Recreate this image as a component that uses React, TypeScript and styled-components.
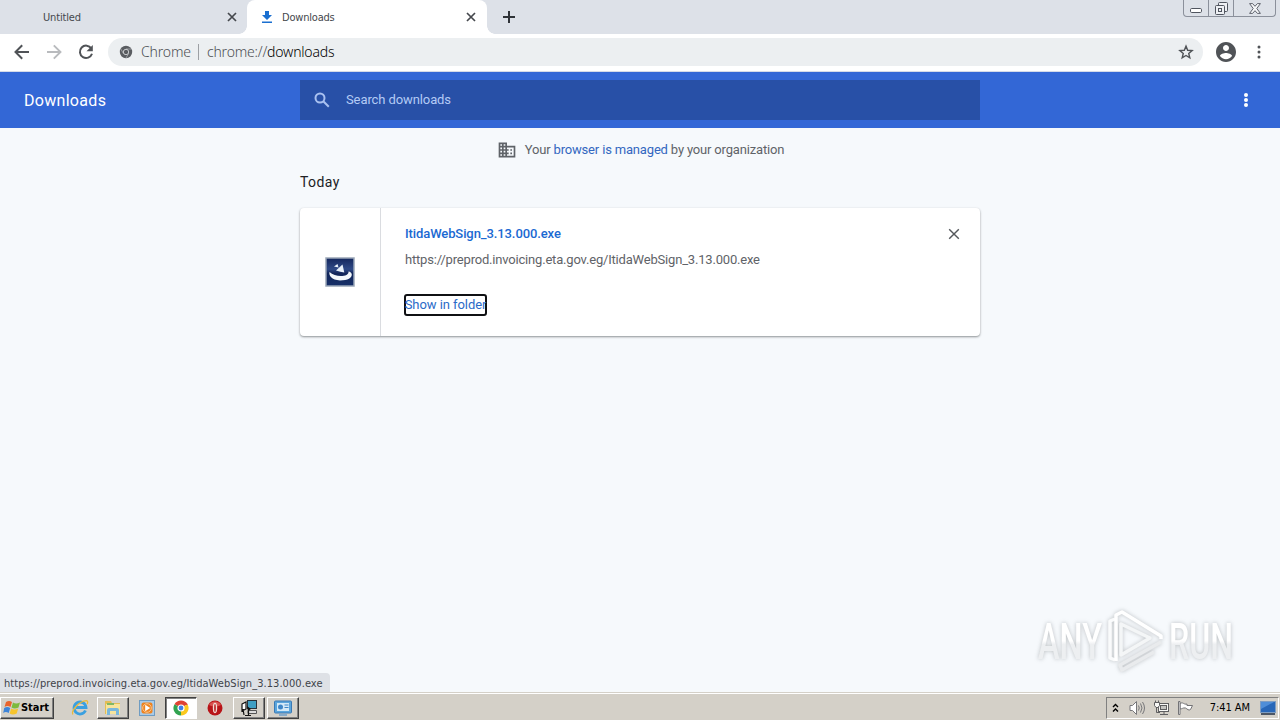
import React from 'react'
import styled, { createGlobalStyle } from 'styled-components'


const GlobalStyle = createGlobalStyle`
	*{
		box-sizing: border-box;
	}
	body{
		margin: 0;
		overflow: hidden;
		font-family: Roboto, "Liberation Sans", sans-serif;
	}
	svg{
		display: block;
		flex: none;
		overflow: visible;
	}
	a{
		text-decoration: none;
	}
`;


function CloseIcon({ size, width }: { size: number; width: number }) {
	return (
		<svg width={size} height={size} viewBox="0 0 10 10" fill="none" stroke="currentColor" strokeWidth={width}>
			<path d="M1 1l8 8M9 1l-8 8" />
		</svg>
	)
}

function DotsIcon({ r, gap }: { r: number; gap: number }) {
	return (
		<svg width="6" height="16" viewBox="-3 -8 6 16" fill="currentColor">
			<circle cy={-gap} r={r} />
			<circle r={r} />
			<circle cy={gap} r={r} />
		</svg>
	)
}

function TabStrip() {
	return (
		<TabStripStyled>
			<Tab $width={247} $pad={43}>
				<TabTitle $spacing={-0.15}>Untitled</TabTitle>
				<TabClose $right={10}><CloseIcon size={10} width={1.7} /></TabClose>
			</Tab>
			<Tab $width={240} $pad={14} $active>
				<svg width="12" height="14" viewBox="0 0 12 14" fill="#1a6fd0">
					<path d="M4 1h4v4h3L6 10 1 5h3zM1 11.5h10V13H1z" />
				</svg>
				<TabTitle $spacing={-0.2} $left={9}>Downloads</TabTitle>
				<TabClose $right={11}><CloseIcon size={10} width={1.7} /></TabClose>
			</Tab>
			<NewTab>
				<svg width="12" height="12" viewBox="0 0 12 12" stroke="#2f3338" strokeWidth="2">
					<path d="M6 0v12M0 6h12" />
				</svg>
			</NewTab>
			<WindowButtons>
				<WindowButton $width={25}>
					<svg width="12" height="5" viewBox="0 0 12 5" fill="#fff" stroke="#50555f">
						<rect x=".5" y=".5" width="11" height="4" rx="1.2" />
					</svg>
				</WindowButton>
				<WindowButton $width={25}>
					<svg width="13" height="13" viewBox="0 0 13 13" fill="#eef0f4" stroke="#50555f">
						<rect x="3.5" y=".5" width="9" height="9" rx="1" />
						<rect x=".5" y="3.5" width="9" height="9" rx="1" />
						<rect x="3.5" y="6.5" width="3" height="3" />
					</svg>
				</WindowButton>
				<WindowButton $width={41}>
					<svg width="12" height="11" viewBox="0 0 12 11" fill="#f5f6f8" stroke="#50555f" strokeWidth=".9">
						<path d="M.6.6h3L6 3.300 8.400.6h3L7.800 5.500l3.600 4.900h-3L6 7.700l-2.400 2.700h-3L4.200 5.500z" />
					</svg>
				</WindowButton>
			</WindowButtons>
		</TabStripStyled>
	)
}

function Toolbar() {
	return (
		<ToolbarStyled>
			<NavIcons>
				<svg width="16" height="16" viewBox="0 0 16 16" fill="none" stroke="#505357" strokeWidth="2">
					<path d="M15 8H2M8.200 1.300L1.500 8l6.700 6.700" />
				</svg>
				<svg width="16" height="16" viewBox="0 0 16 16" fill="none" stroke="#b9bbbe" strokeWidth="1.900">
					<path d="M1 8h13M7.800 1.300L14.500 8l-6.700 6.700" />
				</svg>
				<svg width="16" height="16" viewBox="0 0 16 16" fill="none" stroke="#505357" strokeWidth="2">
					<path d="M13.300 4.400A6.200 6.200 0 1 0 14 9.800" />
					<path d="M14.800 1v6.300H8.500z" fill="#505357" stroke="none" />
				</svg>
			</NavIcons>
			<Omnibox>
				<svg width="14" height="14" viewBox="0 0 14 14">
					<circle cx="7" cy="7" r="6.200" fill="#5a5d61" />
					<path d="M7 4h5.600M4.400 8.500L1.700 3.800M9.600 8.500L7 13" stroke="#b5b8bb" strokeWidth=".7" />
					<circle cx="7" cy="7" r="2.700" fill="#5a5d61" stroke="#d4d6d8" strokeWidth=".9" />
				</svg>
				<OriginLabel>Chrome</OriginLabel>
				<Separator />
				<Url>chrome://<b>downloads</b></Url>
				<svg width="16" height="16" viewBox="0 0 24 24" fill="none" stroke="#505357" strokeWidth="2.100">
					<path d="M12 3.200l2.500 6.200 6.700.5-5.100 4.300 1.600 6.500-5.700-3.500-5.700 3.500 1.600-6.500-5.100-4.300 6.700-.5z" />
				</svg>
			</Omnibox>
			<Avatar>
				<svg width="20" height="20" viewBox="2 2 20 20" fill="#505357">
					<path d="M12 2C6.480 2 2 6.480 2 12s4.480 10 10 10 10-4.480 10-10S17.520 2 12 2zm0 3c1.660 0 3 1.340 3 3s-1.340 3-3 3-3-1.340-3-3 1.340-3 3-3zm0 14.200c-2.500 0-4.710-1.280-6-3.220.03-1.990 4-3.080 6-3.080 1.990 0 5.970 1.090 6 3.080-1.290 1.940-3.500 3.220-6 3.220z" />
				</svg>
			</Avatar>
			<DotsIcon r={1.5} gap={5} />
		</ToolbarStyled>
	)
}

function Header() {
	return (
		<HeaderStyled>
			<h1>Downloads</h1>
			<SearchBox>
				<svg width="16" height="16" viewBox="0 0 16 16" fill="none" stroke="#a9c1f0" strokeWidth="2">
					<circle cx="6" cy="6" r="4.500" />
					<path d="M9.300 9.300l5.500 5.500" />
				</svg>
				<span>Search downloads</span>
			</SearchBox>
			<HeaderMenu><DotsIcon r={2} gap={5} /></HeaderMenu>
		</HeaderStyled>
	)
}

function InstallerIcon() {
	return (
		<svg width="30" height="30" viewBox="0 0 30 30">
			<defs>
				<linearGradient id="installer" x1="0" y1="0" x2="0" y2="1">
					<stop offset="0" stopColor="#13265c" />
					<stop offset=".4" stopColor="#2f4a87" />
					<stop offset=".55" stopColor="#12265a" />
					<stop offset="1" stopColor="#173069" />
				</linearGradient>
			</defs>
			<rect x="1" y="1" width="28" height="28" fill="url(#installer)" stroke="#9aa7b8" strokeWidth="1.500" />
			<path d="M4.500 15c-1 3 2 8 10.500 8.500 8 0 12-3 11.800-6-.2-1.800-1.500-2.800-3.300-3 .8 5.500-13 6.500-19 .5z" fill="#f3f8fc" />
			<path d="M9 9.500l3.500-2.500 1 3.500zM11 13.500l6.500-6 1.800 8-4-.8z" fill="#e8f1fa" />
		</svg>
	)
}

function Content() {
	return (
		<ContentStyled>
			<ManagedNotice>
				<svg width="20" height="20" viewBox="0 0 24 24" fill="#5f6368">
					<path d="M12 7V3H2v18h20V7H12zM6 19H4v-2h2v2zm0-4H4v-2h2v2zm0-4H4V9h2v2zm0-4H4V5h2v2zm4 12H8v-2h2v2zm0-4H8v-2h2v2zm0-4H8V9h2v2zm0-4H8V5h2v2zm10 12h-8v-2h2v-2h-2v-2h2v-2h-2V9h8v10zm-2-8h-2v2h2v-2zm0 4h-2v2h2v-2z" />
				</svg>
				<p>Your <a href="#">browser is managed</a> by your organization</p>
			</ManagedNotice>
			<DayTitle>Today</DayTitle>
			<Card>
				<FileIcon><InstallerIcon /></FileIcon>
				<Details>
					<FileName href="#">ItidaWebSign_3.13.000.exe</FileName>
					<FileUrl>https://preprod.invoicing.eta.gov.eg/ItidaWebSign_3.13.000.exe</FileUrl>
					<ShowButton>Show in folder</ShowButton>
				</Details>
				<RemoveButton><CloseIcon size={12} width={1.2} /></RemoveButton>
			</Card>
			<Watermark>
				<svg width="220" height="72" viewBox="0 0 220 72">
					<defs>
						<linearGradient id="mark" x1="0" y1="0" x2="0" y2="1">
							<stop offset=".48" stopColor="#fff" />
							<stop offset=".54" stopColor="#edeff1" />
						</linearGradient>
					</defs>
					<g fill="url(#mark)" fontFamily="Roboto, sans-serif" fontSize="50" fontWeight="500">
						<text x="4" y="55" textLength="64" lengthAdjust="spacingAndGlyphs">ANY</text>
						<text x="135" y="55" textLength="64" lengthAdjust="spacingAndGlyphs">RUN</text>
					</g>
					<g fill="none" strokeWidth="3.500" strokeLinejoin="round">
						<path d="M81 15l-5 2v37l5 2" stroke="#fafbfc" />
						<path d="M87 20v31l29-17z" stroke="#f4f6f7" />
						<path d="M82 57V11l6-3 39 24v3" stroke="#fff" />
						<path d="M127 38L86 61l2 5 32-18" stroke="#e9ebed" />
					</g>
				</svg>
			</Watermark>
			<StatusBubble>https://preprod.invoicing.eta.gov.eg/ItidaWebSign_3.13.000.exe</StatusBubble>
		</ContentStyled>
	)
}

function Taskbar() {
	return (
		<TaskbarStyled>
			<StartButton>
				<svg width="18" height="17" viewBox="0 0 18 17">
					<path d="M3 3q3-2 6 0L7.500 8q-3-2-6 0z" fill="#e8632c" />
					<path d="M10 3.500q3 2 7 0L15.500 8.500q-4 2-7 0z" fill="#7dba3c" />
					<path d="M1.200 9q3-2 6 0L5.700 14q-3-2-5.500 0z" fill="#3d84d8" />
					<path d="M8.200 9.500q3 2 7 0L13.700 14.500q-4 2-7 0z" fill="#f6c42c" />
				</svg>
				<span>Start</span>
			</StartButton>
			<Launcher>
				<TaskButton $width={34}>
					<svg width="18" height="18" viewBox="0 0 18 18" fill="none">
						<path d="M14.500 11.500A6 6 0 1 1 15 8.500H5" stroke="#3aa0e0" strokeWidth="2.800" />
						<path d="M2 15.500C-1 13 8 2 15.500 1.700c2 .3 1 2.800.5 3.300" stroke="#e9b93a" strokeWidth="1.300" />
					</svg>
				</TaskButton>
				<TaskButton $width={32} $raised>
					<svg width="18" height="17" viewBox="0 0 18 17">
						<path d="M1 2h6l1 2h8v11H1z" fill="#e4bd55" />
						<path d="M2 5h14v10H2z" fill="#f7e49b" />
						<path d="M3 4h7v2H3z" fill="#7fb765" />
						<path d="M3 16v-5q0-2 2-2h8q2 0 2 2v5h-3v-4H6v4z" fill="#79b7dc" />
					</svg>
				</TaskButton>
				<TaskButton $width={36}>
					<svg width="16" height="16" viewBox="0 0 16 16">
						<rect x=".5" y=".5" width="15" height="15" fill="#a9cbe8" stroke="#6f9cc2" />
						<rect x="2.500" y="2.500" width="11" height="11" rx="2" fill="#ef8420" />
						<circle cx="8" cy="8" r="4.300" fill="none" stroke="#f9c48c" />
						<path d="M6.200 4.800l5 3.200-5 3.200z" fill="#fff" />
					</svg>
				</TaskButton>
				<TaskButton $width={32} $pressed>
					<svg width="16" height="16" viewBox="0 0 16 16">
						<path d="M8 8L1.500 4.200A7.500 7.500 0 0 1 14.500 4.200z" fill="#df4334" />
						<path d="M8 8L1.500 4.200A7.500 7.500 0 0 0 8 15.500z" fill="#31a350" />
						<path d="M8 8L8 15.500A7.500 7.500 0 0 0 14.500 4.200z" fill="#fbc91e" />
						<path d="M8 4.300h6.500" stroke="#df4334" />
						<circle cx="8" cy="8" r="3" fill="#3f80e8" stroke="#fff" strokeWidth="1.200" />
					</svg>
				</TaskButton>
				<TaskButton $width={36}>
					<svg width="16" height="16" viewBox="0 0 16 16">
						<circle cx="8" cy="8" r="7.500" fill="#b81418" />
						<path d="M2 5a7 7 0 0 1 12 0q-6 3-12 0z" fill="#d9524f" />
						<ellipse cx="8" cy="8" rx="2.200" ry="5.200" fill="#f1dcd4" />
						<ellipse cx="8" cy="8" rx=".8" ry="4" fill="#b81418" />
					</svg>
				</TaskButton>
				<TaskButton $width={32} $raised>
					<svg width="18" height="18" viewBox="0 0 18 18">
						<rect x="7.500" y="1.500" width="9" height="8" fill="#3e9fc4" stroke="#29323a" />
						<path d="M8 11.500h8.500v3H8z" fill="#dcdcdc" stroke="#555" />
						<path d="M2 5l4-2v7l-4 2zM3 10l1 6M5 16.500h6M8.500 10v6" fill="#fff" stroke="#111" strokeWidth="1.200" />
						<path d="M7 7l4 3-3 2z" fill="#111" />
					</svg>
				</TaskButton>
				<TaskButton $width={32} $raised $left={2}>
					<svg width="18" height="16" viewBox="0 0 18 16">
						<rect x=".5" y="1" width="17" height="12" rx="1" fill="#5aa5dc" stroke="#3a79b4" />
						<rect x="3" y="3" width="12" height="8" fill="#d3e9f8" />
						<circle cx="6.500" cy="7" r="2.500" fill="#3e86c8" />
						<path d="M10.500 5h4M10.500 7.500h4M5 15h8" stroke="#3e86c8" />
					</svg>
				</TaskButton>
			</Launcher>
			<Tray>
				<svg width="7" height="10" viewBox="0 0 7 10" fill="none" stroke="#000" strokeWidth="1.400">
					<path d="M1 4l2.500-2.500L6 4M1 8.500L3.500 6 6 8.500" />
				</svg>
				<svg width="17" height="16" viewBox="0 0 17 16" fill="#fff" stroke="#77777a">
					<path d="M1 5.500h2.500L7.500 1.500v13L3.500 10.500H1z" />
					<path d="M9.500 5.500q1.500 2.500 0 5M11.500 3.500q3 4.500 0 9M13.500 2q4 6 0 12" fill="none" />
				</svg>
				<svg width="17" height="16" viewBox="0 0 17 16" fill="#f8f8f6" stroke="#5f5f61">
					<rect x="5.500" y="3.500" width="10" height="8" />
					<rect x="7.500" y="5.500" width="6" height="4" fill="#c5c5c2" />
					<path d="M7 14.500h8M11 12v2M3.500 7v5.500H7" fill="none" />
					<path d="M1.500 2.500h5v3l-1.500 2h-2l-1.500-2zM2.500.5v2M5.500.5v2" />
				</svg>
				<svg width="17" height="16" viewBox="0 0 17 16" fill="#fff" stroke="#737376">
					<path d="M3 3.500c3-2 4 1.500 7 .5v1.500h5.500l-2 4c-2 1.500-3-.5-5-1.500C6 7.500 5 9 3 9z" />
					<path d="M1.500 1.500h1.500v13H1.500z" />
				</svg>
				<Clock>7:41 AM</Clock>
				<svg width="16" height="14" viewBox="0 0 16 14">
					<rect x=".5" y=".5" width="15" height="11" fill="#2867b8" stroke="#7e9dc2" />
					<path d="M1 1h13L1 8z" fill="#4f8ed8" />
					<path d="M1 13h14" stroke="#202f45" strokeWidth="1.500" />
				</svg>
			</Tray>
		</TaskbarStyled>
	)
}


export default function App() {
	return (
		<Screen>
			<GlobalStyle />
			<TabStrip />
			<Toolbar />
			<Header />
			<Content />
			<Taskbar />
		</Screen>
	)
}


const Screen = styled.div`
	width: 1280px;
	height: 720px;
	display: flex;
	flex-direction: column;
	overflow: hidden;
`;

const TabStripStyled = styled.div`
	height: 34px;
	display: flex;
	background: #dde1e8;
`;

const Tab = styled.div<{ $width: number; $pad: number; $active?: boolean }>`
	width: ${p => p.$width}px;
	padding-left: ${p => p.$pad}px;
	display: flex;
	align-items: center;
	position: relative;
	border-radius: 8px 8px 0 0;
	background: ${p => p.$active ? '#fff' : 'transparent'};

	&::before, &::after{
		content: ${p => p.$active ? '""' : 'none'};
		position: absolute;
		bottom: 0;
		width: 8px;
		height: 8px;
	}
	&::before{
		left: -8px;
		background: radial-gradient(circle at 0 0, transparent 7.500px, #fff 8px);
	}
	&::after{
		right: -8px;
		background: radial-gradient(circle at 100% 0, transparent 7.500px, #fff 8px);
	}
`;

const TabTitle = styled.span<{ $spacing: number; $left?: number }>`
	margin-left: ${p => p.$left || 0}px;
	padding-top: 1px;
	font: 11px/14px "DejaVu Sans Condensed", "DejaVu Sans", sans-serif;
	letter-spacing: ${p => p.$spacing}px;
	color: #45484d;
`;

const TabClose = styled.span<{ $right: number }>`
	margin-left: auto;
	margin-right: ${p => p.$right}px;
	color: #45484d;
`;

const NewTab = styled.div`
	display: flex;
	align-items: center;
	margin-left: 16px;
`;

const WindowButtons = styled.div`
	display: flex;
	height: 17px;
	margin-left: auto;
	margin-right: 4px;
	border: 1px solid #8b909b;
	border-top: 0;
	border-radius: 0 0 4px 4px;
`;

const WindowButton = styled.div<{ $width: number }>`
	width: ${p => p.$width}px;
	display: flex;
	align-items: center;
	justify-content: center;
	border-right: 1px solid #8b909b;

	&:first-child{
		padding-top: 4px;
	}
	&:last-child{
		border-right: 0;
	}
`;

const ToolbarStyled = styled.div`
	height: 38px;
	display: flex;
	align-items: center;
	padding: 0 18px 2px 14px;
	background: #fff;
	border-bottom: 1px solid #d5dbe8;
	color: #505357;
`;

const NavIcons = styled.div`
	display: flex;
	gap: 16px;
	width: 94px;
`;

const Omnibox = styled.div`
	flex: 1;
	height: 28px;
	display: flex;
	align-items: center;
	padding: 0 9px 0 11px;
	border-radius: 14px;
	background: #eceff1;
	font: 300 14px/18px "Noto Sans", sans-serif;
	color: #4d5054;
`;

const OriginLabel = styled.span`
	margin-left: 8px;
	width: 50px;
	white-space: nowrap;
	letter-spacing: -0.15px;
`;

const Separator = styled.span`
	width: 1px;
	height: 16px;
	margin: 0 8px 0 7px;
	background: #9da0a4;
`;

const Url = styled.span`
	flex: 1;
	letter-spacing: -0.2px;

	b{
		font-weight: 300;
		color: #000;
	}
`;

const Avatar = styled.div`
	margin: 0 20px 0 13px;
`;

const HeaderStyled = styled.header`
	height: 56px;
	display: flex;
	align-items: center;
	background: #3367d6;
	color: #fff;

	h1{
		width: 300px;
		margin: 0;
		padding: 0 0 0 24px;
		font-size: 16px;
		font-weight: 400;
		letter-spacing: 0.3px;
	}
`;

const SearchBox = styled.div`
	width: 680px;
	height: 40px;
	display: flex;
	align-items: center;
	gap: 16px;
	padding-left: 14px;
	background: #2850a7;
	font-size: 13px;
	letter-spacing: -0.1px;
	color: #b4cbf5;

	span{
		padding-bottom: 2px;
	}
`;

const HeaderMenu = styled.div`
	margin-left: auto;
	margin-right: 31px;
`;

const ContentStyled = styled.main`
	flex: 1;
	position: relative;
	display: flex;
	flex-direction: column;
	padding: 12px 300px 0;
	background: #f6f9fc;
`;

const ManagedNotice = styled.div`
	height: 20px;
	display: flex;
	align-items: center;
	justify-content: center;
	gap: 8px;
	padding-left: 1px;
	font-size: 13px;
	color: #5f6368;

	p{
		margin: 0;
		padding-bottom: 2px;
		letter-spacing: -0.17px;
	}
	a{
		color: #3367c0;
	}
`;

const DayTitle = styled.h2`
	margin: 12px 0 15px;
	font-size: 14px;
	font-weight: 400;
	line-height: 21px;
	letter-spacing: 0.4px;
	color: #202124;
`;

const Card = styled.div`
	height: 128px;
	display: flex;
	border-radius: 4px;
	background: #fff;
	box-shadow: 0 1px 2px rgba(60, 64, 67, 0.45), 0 1px 3px rgba(60, 64, 67, 0.15);
`;

const FileIcon = styled.div`
	width: 81px;
	display: flex;
	align-items: center;
	justify-content: center;
	border-right: 1px solid #dadce0;
`;

const Details = styled.div`
	flex: 1;
	display: flex;
	flex-direction: column;
	align-items: flex-start;
	padding: 16px 0 0 24px;
	font-size: 13px;
	line-height: 20px;
`;

const FileName = styled.a`
	font-weight: 500;
	letter-spacing: -0.1px;
	color: #1a69d2;
`;

const FileUrl = styled.span`
	margin-top: 6px;
	letter-spacing: -0.19px;
	color: #5f6368;
`;

const ShowButton = styled.button`
	width: 83px;
	height: 22px;
	margin: 24px 0 0 -1px;
	padding: 0;
	border: 2px solid #101114;
	border-radius: 3px;
	background: #fff;
	display: flex;
	align-items: center;
	justify-content: center;
	font: 13px/18px Roboto, sans-serif;
	letter-spacing: -0.07px;
	white-space: nowrap;
	color: #2b6bc8;
`;

const RemoveButton = styled.div`
	margin: 20px 20px 0 0;
	color: #55585c;
`;

const Watermark = styled.div`
	position: absolute;
	right: 26px;
	bottom: 16px;
	filter: drop-shadow(0 0 2px rgba(80, 85, 90, 0.35));
`;

const StatusBubble = styled.div`
	position: absolute;
	left: 0;
	bottom: 0;
	width: 330px;
	height: 19px;
	padding-left: 4px;
	border-top-right-radius: 4px;
	background: #dee1e6;
	font: 11px/21px "DejaVu Sans Condensed", "DejaVu Sans", sans-serif;
	letter-spacing: 0.06px;
	white-space: nowrap;
	color: #404349;
`;

const TaskbarStyled = styled.footer`
	height: 28px;
	display: flex;
	align-items: center;
	padding-top: 2px;
	background: #d4d0c8;
	border-top: 1px solid #d4d0c8;
	box-shadow: inset 0 1px #fff;
`;

const StartButton = styled.div`
	width: 54px;
	height: 22px;
	display: flex;
	align-items: center;
	padding-left: 2px;
	border: 1px solid;
	border-color: #fff #404040 #404040 #fff;
	box-shadow: inset -1px -1px #808080;
	font: bold 11px/14px "DejaVu Sans Condensed", sans-serif;
	letter-spacing: -0.05px;
	color: #000;
`;

const Launcher = styled.div`
	display: flex;
	margin-left: 9px;
`;

const TaskButton = styled.div<{ $width: number; $left?: number; $raised?: boolean; $pressed?: boolean }>`
	width: ${p => p.$width}px;
	height: 22px;
	margin-left: ${p => p.$left || 0}px;
	display: flex;
	align-items: center;
	justify-content: center;
	background: ${p => p.$pressed ? '#fff' : 'transparent'};
	border: 1px solid transparent;
	${p => p.$raised && 'border-color: #fff #404040 #404040 #fff; box-shadow: inset -1px -1px #808080;'}
	${p => p.$pressed && 'border-color: #404040 #fff #fff #404040; box-shadow: inset 1px 1px #808080;'}
`;

const Tray = styled.div`
	width: 173px;
	height: 22px;
	margin-left: auto;
	margin-right: 1px;
	padding: 0 2px 0 5px;
	display: flex;
	align-items: center;
	border: 1px solid;
	border-color: #808080 #fff #fff #808080;

	svg + svg{
		margin-left: 8px;
	}
	svg:nth-child(2){
		margin-left: 10px;
	}
	svg:nth-child(3), svg:nth-child(4){
		margin-left: 7px;
	}
`;

const Clock = styled.span`
	margin-left: auto;
	margin-right: 10px;
	font: 11px/14px "DejaVu Sans Condensed", sans-serif;
	letter-spacing: -0.05px;
	white-space: nowrap;
	color: #000;
`;
